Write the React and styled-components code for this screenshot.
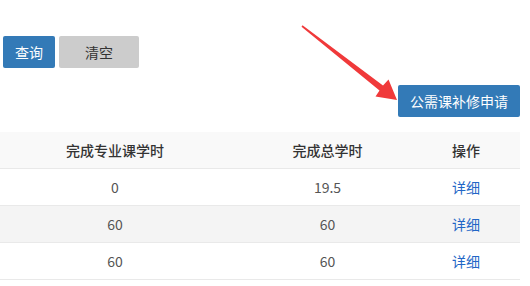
import React from 'react';
import styled, { createGlobalStyle } from 'styled-components';

const GlobalStyle = createGlobalStyle`
  html, body {
    margin: 0;
    padding: 0;
    background: #fff;
  }
  body {
    font-family: "Noto Sans CJK SC", "Liberation Sans", sans-serif;
    font-size: 14px;
    color: #333;
  }
`;

const Page = styled.div`
  position: relative;
  width: 530px;
  height: 286px;
  overflow: hidden;
  padding-top: 36px;
  box-sizing: border-box;
`;

const SearchBar = styled.div`
  display: flex;
  gap: 4px;
  padding-left: 3px;
`;

const Button = styled.button`
  height: 32px;
  min-width: ${(p) => p.$width || 0}px;
  padding: 0 12px;
  border: none;
  border-radius: 2px;
  font-family: inherit;
  font-size: 14px;
  line-height: 32px;
  cursor: pointer;
  background: ${(p) => (p.$variant === 'gray' ? '#cccccc' : '#337ab7')};
  color: ${(p) => (p.$variant === 'gray' ? '#333' : '#fff')};
`;

const ActionBar = styled.div`
  display: flex;
  justify-content: flex-end;
  padding-right: 10px;
  margin-top: 17px;
`;

const Table = styled.div`
  width: 520px;
  margin-top: 15px;
`;

const Row = styled.div`
  display: grid;
  grid-template-columns: 230px 195px 82px;
  height: 36px;
  border-bottom: 1px solid #e9e9e9;
  background: ${(p) => (p.$head ? '#f9f9f9' : p.$striped ? '#f4f4f4' : '#fff')};
`;

const Cell = styled.div`
  display: flex;
  align-items: center;
  justify-content: center;
  font-weight: ${(p) => (p.$head ? 500 : 400)};
  color: ${(p) => (p.$head ? '#333' : '#555')};
`;

const Link = styled.a`
  color: #2266c6;
  text-decoration: none;
  cursor: pointer;
`;

const Arrow = styled.svg`
  position: absolute;
  left: 0;
  top: 0;
  pointer-events: none;
`;

const rows = [
  { major: '0', total: '19.5' },
  { major: '60', total: '60' },
  { major: '60', total: '60' },
];

const App = () => (
  <Page>
    <GlobalStyle />
    <SearchBar>
      <Button>查询</Button>
      <Button $variant="gray" $width={80}>清空</Button>
    </SearchBar>
    <ActionBar>
      <Button>公需课补修申请</Button>
    </ActionBar>
    <Table>
      <Row $head>
        <Cell $head>完成专业课学时</Cell>
        <Cell $head>完成总学时</Cell>
        <Cell $head>操作</Cell>
      </Row>
      {rows.map((r, i) => (
        <Row key={i} $striped={i % 2 === 1}>
          <Cell>{r.major}</Cell>
          <Cell>{r.total}</Cell>
          <Cell>
            <Link>详细</Link>
          </Cell>
        </Row>
      ))}
    </Table>
    <Arrow width="530" height="286" viewBox="0 0 530 286">
      <polygon
        points="302.5,25.3 383,85.5 388.5,79.5 397,100 375.5,96.5 379.5,90.5 301.5,26.7"
        fill="#f0393a"
      />
    </Arrow>
  </Page>
);

export default App;
